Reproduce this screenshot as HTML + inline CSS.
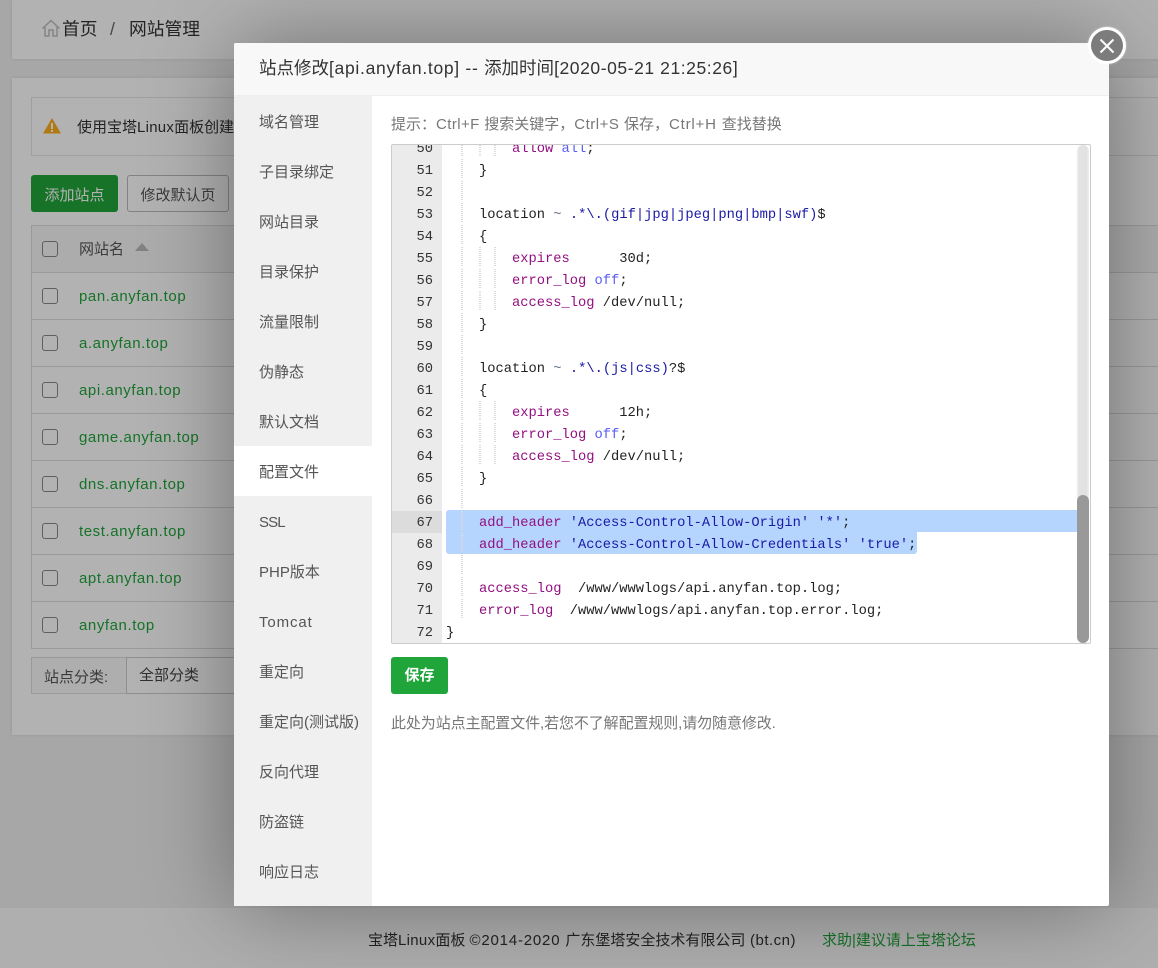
<!DOCTYPE html>
<html lang="zh">
<head>
<meta charset="utf-8">
<title>网站管理</title>
<style>
*{box-sizing:border-box;margin:0;padding:0}
html,body{width:1158px;height:968px;overflow:hidden}
body{position:relative;background:#f0f0f0;font-family:"Liberation Sans","Noto Sans CJK SC",sans-serif;color:#333;font-size:15px}
.a{position:absolute;white-space:nowrap}
.panel{background:#fff;box-shadow:0 0 4px rgba(0,0,0,.1)}
.cb{position:absolute;left:42px;width:16px;height:16px;border:1px solid #888;border-radius:3px;background:#fff}
.row{position:absolute;left:31px;width:1200px;height:47px;border:1px solid #ddd;border-top:0}
.site{position:absolute;left:79px;color:#20a53a;font-size:15px;line-height:20px;white-space:nowrap;letter-spacing:.57px}
#ov{position:absolute;left:0;top:0;width:1158px;height:968px;background:rgba(0,0,0,.3)}
#modal{position:absolute;left:234px;top:43px;width:875px;height:863px;background:#fff;border-radius:2px;box-shadow:1px 1px 90px rgba(0,0,0,.38)}
#title{position:absolute;left:0;top:0;width:875px;height:53px;background:#f8f8f8;border-bottom:1px solid #eee;border-radius:2px 2px 0 0;padding-left:25px;line-height:51px;font-size:17.5px;color:#333;white-space:nowrap}
#side{position:absolute;left:0;top:53px;width:138px;height:810px;background:#f0f0f0}
#side div{height:50px;line-height:54px;padding-left:25px;font-size:15px;color:#555;white-space:nowrap}
#side div.on{background:#fff}
#ed{position:absolute;left:157px;top:101px;width:700px;height:500px;border:1px solid #ccc;border-radius:2px;overflow:hidden;background:#fff}
#gut{position:absolute;left:0;top:0;width:50px;height:498px;background:#ebebeb}
.code{position:absolute;left:0;top:-8px;width:698px;font-family:"Liberation Mono","DejaVu Sans Mono",monospace;font-size:13.75px;line-height:26px;color:#222}
.l{position:relative;height:22px;white-space:pre;padding-left:54px}
.n{position:absolute;left:0;top:0;width:41px;height:22px;text-align:right;color:#333}
.n.act{left:0;width:50px;padding-right:9px;background:#dcdcdc}
.g{position:absolute;top:0;width:2px;height:20px;background:repeating-linear-gradient(#dcdcdc 0 1px,#fff0 1px 2px)}
.k{color:#930f80}.c{color:#585cf6}.s{color:#1a1aa6}.t{color:#687687}
#sel1{position:absolute;left:54px;top:365px;width:631px;height:22px;background:#b5d5ff;border-radius:3px 0 0 0}
#sel2{position:absolute;left:54px;top:387px;width:471px;height:22px;background:#b5d5ff;border-radius:0 0 3px 3px}
#track{position:absolute;left:685px;top:0;width:12px;height:498px;background:linear-gradient(90deg,#efefef,#e2e2e2 20%,#e2e2e2 80%,#efefef);border-radius:6px}
#thumb{position:absolute;left:685px;top:350px;width:12px;height:148px;background:#999;border-radius:6px}
#close{position:absolute;left:1088px;top:27px;width:38px;height:37px;border-radius:50%;background:#7c7c7c;border:3px solid #fff;box-shadow:0 0 2px rgba(255,255,255,.6)}
</style>
</head>
<body>
<!-- page behind -->
<div class="a panel" style="left:12px;top:0;width:1200px;height:59px"></div>
<svg class="a" style="left:41px;top:18px" width="20" height="20" viewBox="0 0 20 20" fill="none" stroke="#bdbdbd" stroke-width="1.5"><path d="M1.5 10.5 10 2.5l8.500 8M4 9v9h4v-6h4v6h4V9"/></svg>
<div class="a" style="left:62px;top:16px;font-size:17.750px;line-height:26px;color:#333">首页</div>
<div class="a" style="left:110px;top:16px;font-size:17.750px;line-height:26px;color:#666">/</div>
<div class="a" style="left:129px;top:16px;font-size:17.750px;line-height:26px;color:#333">网站管理</div>

<div class="a panel" style="left:12px;top:78px;width:1200px;height:657px"></div>
<div class="a" style="left:31px;top:97px;width:1200px;height:59px;border:1px solid #e4e4e4"></div>
<svg class="a" style="left:43px;top:118px" width="18" height="16" viewBox="0 0 18 16"><path d="M9 0 18 15.500H0z" fill="#fdae1c"/><rect x="8" y="5" width="2" height="6" fill="#fff"/><rect x="8" y="12" width="2" height="2" fill="#fff"/></svg>
<div class="a" style="left:77px;top:118px;line-height:20px;font-size:15px">使用宝塔<span style="letter-spacing:.25px">Linux</span>面板创建</div>

<div class="a" style="left:31px;top:175px;width:87px;height:37px;background:#20a53a;border-radius:3px;color:#fff;text-align:center;line-height:41px;font-size:15px">添加站点</div>
<div class="a" style="left:127px;top:175px;width:102px;height:37px;background:#fff;border:1px solid #bbb;border-radius:3px;color:#555;text-align:center;line-height:39px;font-size:15px">修改默认页</div>

<div class="a" style="left:31px;top:225px;width:1200px;height:48px;background:#f6f6f6;border:1px solid #ddd"></div>
<div class="cb" style="top:241px;background:#f6f6f6"></div>
<div class="a" style="left:79px;top:240px;font-size:15px;line-height:20px;color:#555">网站名</div>
<div class="a" style="left:135px;top:243px;width:0;height:0;border-left:7px solid transparent;border-right:7px solid transparent;border-bottom:8px solid #bbb"></div>

<div class="row" style="top:273px"></div><div class="cb" style="top:288px"></div><div class="site" style="top:287px">pan.anyfan.top</div>
<div class="row" style="top:320px"></div><div class="cb" style="top:335px"></div><div class="site" style="top:334px">a.anyfan.top</div>
<div class="row" style="top:367px"></div><div class="cb" style="top:382px"></div><div class="site" style="top:381px">api.anyfan.top</div>
<div class="row" style="top:414px"></div><div class="cb" style="top:429px"></div><div class="site" style="top:428px">game.anyfan.top</div>
<div class="row" style="top:461px"></div><div class="cb" style="top:476px"></div><div class="site" style="top:475px">dns.anyfan.top</div>
<div class="row" style="top:508px"></div><div class="cb" style="top:523px"></div><div class="site" style="top:522px">test.anyfan.top</div>
<div class="row" style="top:555px"></div><div class="cb" style="top:570px"></div><div class="site" style="top:569px">apt.anyfan.top</div>
<div class="row" style="top:602px"></div><div class="cb" style="top:617px"></div><div class="site" style="top:616px">anyfan.top</div>

<div class="a" style="left:31px;top:657px;width:96px;height:37px;border:1px solid #ddd;background:#fafafa;line-height:40px;padding-left:12px;font-size:15px;color:#555">站点分类:</div>
<div class="a" style="left:126px;top:657px;width:130px;height:37px;border:1px solid #ccc;background:#fff;line-height:36px;padding-left:12px;font-size:15px;color:#444">全部分类</div>

<div class="a" style="left:0;top:908px;width:1158px;height:60px;background:#fbfbfb"></div>
<div class="a" style="left:368px;top:931px;font-size:15px;line-height:20px;color:#333">宝塔<span style="letter-spacing:.3px">Linux</span>面板 <span style="letter-spacing:.8px">©2014-2020 </span>广东堡塔安全技术有限公司<span style="letter-spacing:.5px"> (bt.cn)</span></div>
<div class="a" style="left:822px;top:931px;font-size:15px;line-height:20px;color:#20a53a">求助|建议请上宝塔论坛</div>

<div id="ov"></div>

<div id="modal">
  <div id="title">站点修改<span style="letter-spacing:.7px">[api.anyfan.top] -- </span>添加时间<span style="letter-spacing:.57px">[2020-05-21 21:25:26]</span></div>
  <div id="side">
    <div>域名管理</div><div>子目录绑定</div><div>网站目录</div><div>目录保护</div><div>流量限制</div><div>伪静态</div><div>默认文档</div><div class="on">配置文件</div><div style="letter-spacing:-.9px">SSL</div><div>PHP版本</div><div style="letter-spacing:.9px">Tomcat</div><div>重定向</div><div>重定向(测试版)</div><div>反向代理</div><div>防盗链</div><div>响应日志</div>
  </div>
  <div class="a" style="left:157px;top:72px;font-size:15px;line-height:20px;color:#777">提示：<span style="letter-spacing:.4px">Ctrl+F </span>搜索关键字，<span style="letter-spacing:.5px">Ctrl+S </span>保存，<span style="letter-spacing:.8px">Ctrl+H </span>查找替换</div>
  <div id="ed">
    <div id="gut"></div>
    <div id="sel1"></div><div id="sel2"></div>
    <div class="code">
<div class="l"><span class="n">50</span><i class="g" style="left:69px"></i><i class="g" style="left:87px"></i><i class="g" style="left:102px"></i>        <span class="k">allow</span> <span class="c">all</span>;</div>
<div class="l"><span class="n">51</span><i class="g" style="left:69px"></i>    }</div>
<div class="l"><span class="n">52</span><i class="g" style="left:69px"></i></div>
<div class="l"><span class="n">53</span><i class="g" style="left:69px"></i>    location <span class="t">~</span> <span class="s">.*\.(gif|jpg|jpeg|png|bmp|swf)</span>$</div>
<div class="l"><span class="n">54</span><i class="g" style="left:69px"></i>    {</div>
<div class="l"><span class="n">55</span><i class="g" style="left:69px"></i><i class="g" style="left:87px"></i><i class="g" style="left:102px"></i>        <span class="k">expires</span>      30d;</div>
<div class="l"><span class="n">56</span><i class="g" style="left:69px"></i><i class="g" style="left:87px"></i><i class="g" style="left:102px"></i>        <span class="k">error_log</span> <span class="c">off</span>;</div>
<div class="l"><span class="n">57</span><i class="g" style="left:69px"></i><i class="g" style="left:87px"></i><i class="g" style="left:102px"></i>        <span class="k">access_log</span> /dev/null;</div>
<div class="l"><span class="n">58</span><i class="g" style="left:69px"></i>    }</div>
<div class="l"><span class="n">59</span><i class="g" style="left:69px"></i></div>
<div class="l"><span class="n">60</span><i class="g" style="left:69px"></i>    location <span class="t">~</span> <span class="s">.*\.(js|css)</span>?$</div>
<div class="l"><span class="n">61</span><i class="g" style="left:69px"></i>    {</div>
<div class="l"><span class="n">62</span><i class="g" style="left:69px"></i><i class="g" style="left:87px"></i><i class="g" style="left:102px"></i>        <span class="k">expires</span>      12h;</div>
<div class="l"><span class="n">63</span><i class="g" style="left:69px"></i><i class="g" style="left:87px"></i><i class="g" style="left:102px"></i>        <span class="k">error_log</span> <span class="c">off</span>;</div>
<div class="l"><span class="n">64</span><i class="g" style="left:69px"></i><i class="g" style="left:87px"></i><i class="g" style="left:102px"></i>        <span class="k">access_log</span> /dev/null;</div>
<div class="l"><span class="n">65</span><i class="g" style="left:69px"></i>    }</div>
<div class="l"><span class="n">66</span><i class="g" style="left:69px"></i></div>
<div class="l"><span class="n act">67</span><i class="g" style="left:69px"></i>    <span class="k">add_header</span> <span class="s">'Access-Control-Allow-Origin'</span> <span class="s">'*'</span>;</div>
<div class="l"><span class="n">68</span><i class="g" style="left:69px"></i>    <span class="k">add_header</span> <span class="s">'Access-Control-Allow-Credentials'</span> <span class="s">'true'</span>;</div>
<div class="l"><span class="n">69</span><i class="g" style="left:69px"></i></div>
<div class="l"><span class="n">70</span><i class="g" style="left:69px"></i>    <span class="k">access_log</span>  /www/wwwlogs/api.anyfan.top.log;</div>
<div class="l"><span class="n">71</span><i class="g" style="left:69px"></i>    <span class="k">error_log</span>  /www/wwwlogs/api.anyfan.top.error.log;</div>
<div class="l"><span class="n">72</span>}</div>
    </div>
    <div id="track"></div>
    <div id="thumb"></div>
  </div>
  <div class="a" style="left:157px;top:614px;width:57px;height:37px;background:#20a53a;border-radius:3px;color:#fff;text-align:center;line-height:37px;font-size:15px;font-weight:bold">保存</div>
  <div class="a" style="left:157px;top:671px;font-size:15px;line-height:20px;color:#777;letter-spacing:-.1px">此处为站点主配置文件,若您不了解配置规则,请勿随意修改.</div>
</div>

<div id="close"><svg style="position:absolute;left:6px;top:5.500px" width="20" height="20" viewBox="0 0 20 20" fill="none" stroke="#fff" stroke-width="2"><path d="M3.500 3.500l13 13M16.500 3.500l-13 13"/></svg></div>
</body>
</html>
